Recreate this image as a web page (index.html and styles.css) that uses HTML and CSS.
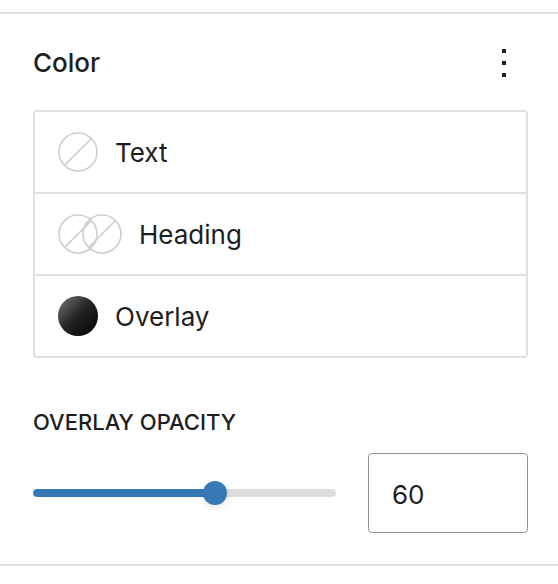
FILE: index.html
```html
<!DOCTYPE html>
<html>
<head>
<meta charset="utf-8">
<link rel="stylesheet" href="styles.css">
</head>
<body>
<div class="panel">
  <section class="section">
    <div class="header">
      <h2 class="title">Color</h2>
      <button class="menu" aria-label="Options">
        <svg width="8" height="32" viewBox="0 0 8 32"><rect x="2" y="2" width="4" height="4"/><rect x="2" y="14" width="4" height="4"/><rect x="2" y="26" width="4" height="4"/></svg>
      </button>
    </div>
    <div class="card">
      <div class="row">
        <svg class="swatch" width="40" height="40" viewBox="0 0 40 40"><circle cx="20" cy="20" r="19" fill="none" stroke="#cfcfcf" stroke-width="1.6"/><line x1="6.6" y1="33.4" x2="33.4" y2="6.6" stroke="#cfcfcf" stroke-width="1.6"/></svg>
        <span class="label">Text</span>
      </div>
      <div class="row">
        <svg class="swatch" width="64" height="40" viewBox="0 0 64 40"><circle cx="20" cy="20" r="19" fill="none" stroke="#cfcfcf" stroke-width="1.6"/><line x1="6.6" y1="33.4" x2="33.4" y2="6.6" stroke="#cfcfcf" stroke-width="1.6"/><circle cx="44" cy="20" r="19" fill="none" stroke="#cfcfcf" stroke-width="1.6"/><line x1="30.6" y1="33.4" x2="57.4" y2="6.6" stroke="#cfcfcf" stroke-width="1.6"/></svg>
        <span class="label">Heading</span>
      </div>
      <div class="row">
        <span class="dot"></span>
        <span class="label">Overlay</span>
      </div>
    </div>
    <div class="field">
      <div class="field-label">OVERLAY OPACITY</div>
      <div class="control">
        <div class="range">
          <div class="track"><div class="fill" style="width:60%"></div></div>
          <div class="thumb" style="left:60%"></div>
        </div>
        <div class="number">60</div>
      </div>
    </div>
  </section>
</div>
</body>
</html>
```
FILE: styles.css
```css
* { box-sizing: border-box; }
html, body { margin: 0; padding: 0; background: #fff; }
body {
  font-family: Inter, "Liberation Sans", Arial, sans-serif;
  color: #1e1e1e;
  width: 558px;
  height: 584px;
  overflow: hidden;
}
.panel { padding-top: 12px; }
.section {
  border-top: 2px solid #e0e0e0;
  border-bottom: 2px solid #e0e0e0;
  padding: 34px 30px 31px 33px;
}
.header {
  display: flex;
  align-items: center;
  justify-content: space-between;
  height: 30px;
}
.title {
  margin: 0;
  font-size: 26px;
  font-weight: 500;
  line-height: 30px;
}
.menu {
  border: 0;
  background: none;
  padding: 0;
  margin-right: 20px;
  width: 8px;
  height: 32px;
  display: flex;
}
.menu rect { fill: #1e1e1e; }
.card {
  margin-top: 32px;
  border: 2px solid #e0e0e0;
  border-radius: 4px;
}
.row {
  display: flex;
  align-items: center;
  gap: 17px;
  height: 80px;
  padding-left: 23px;
}
.row + .row { border-top: 2px solid #e0e0e0; height: 82px; }
.swatch { display: block; flex: none; }
.dot {
  width: 40px;
  height: 40px;
  border-radius: 50%;
  background: linear-gradient(135deg, #777 0%, #222 50%, #000 100%);
  flex: none;
}
.label {
  font-size: 26px;
  line-height: 30px;
  padding-top: 2px;
}
.field { margin-top: 49px; }
.field-label {
  font-size: 22px;
  font-weight: 500;
  line-height: 30px;
}
.control {
  margin-top: 16px;
  display: flex;
  align-items: center;
  gap: 32px;
}
.range {
  position: relative;
  flex: 1;
  height: 80px;
  display: flex;
  align-items: center;
}
.track {
  width: 100%;
  height: 8px;
  border-radius: 4px;
  background: #dddddd;
  overflow: hidden;
}
.fill {
  height: 100%;
  background: #3779b7;
  border-radius: 4px;
}
.thumb {
  position: absolute;
  top: 28px;
  width: 24px;
  height: 24px;
  margin-left: -12px;
  border-radius: 50%;
  background: #3779b7;
  box-shadow: 0 2px 6px rgba(0,0,0,0.12);
}
.number {
  width: 160px;
  height: 80px;
  flex: none;
  border: 1.5px solid #949494;
  border-radius: 4px;
  padding-left: 23px;
  padding-top: 2px;
  display: flex;
  align-items: center;
  font-size: 26px;
}
```
